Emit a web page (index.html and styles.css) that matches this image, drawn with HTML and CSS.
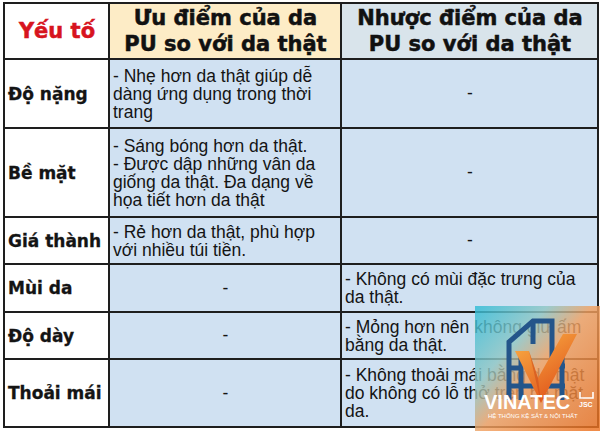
FILE: index.html
```html
<!DOCTYPE html>
<html lang="vi">
<head>
<meta charset="utf-8">
<link rel="stylesheet" href="styles.css">
</head>
<body>
<div class="sheet">
  <table class="cmp">
    <colgroup>
      <col class="c1"><col class="c2"><col class="c3">
    </colgroup>
    <tr class="r-head">
      <th class="h-key">Yếu tố</th>
      <th class="h-pro">Ưu điểm của da<br>PU so với da thật</th>
      <th class="h-con">Nhược điểm của da<br>PU so với da thật</th>
    </tr>
    <tr class="r1">
      <td class="key">Độ nặng</td>
      <td class="txt">- Nhẹ hơn da thật giúp dễ<br>dàng ứng dụng trong thời<br>trang</td>
      <td class="dash">-</td>
    </tr>
    <tr class="r2">
      <td class="key">Bề mặt</td>
      <td class="txt">- Sáng bóng hơn da thật.<br>- Được dập những vân da<br>giống da thật. Đa dạng về<br>họa tiết hơn da thật</td>
      <td class="dash">-</td>
    </tr>
    <tr class="r3">
      <td class="key">Giá thành</td>
      <td class="txt">- Rẻ hơn da thật, phù hợp<br>với nhiều túi tiền.</td>
      <td class="dash">-</td>
    </tr>
    <tr class="r4">
      <td class="key">Mùi da</td>
      <td class="dash">-</td>
      <td class="txt">- Không có mùi đặc trưng của<br>da thật.</td>
    </tr>
    <tr class="r5">
      <td class="key">Độ dày</td>
      <td class="dash">-</td>
      <td class="txt">- Mỏng hơn nên không giữ ấm<br>bằng da thật.</td>
    </tr>
    <tr class="r6">
      <td class="key">Thoải mái</td>
      <td class="dash">-</td>
      <td class="txt">- Không thoải mái bằng da thật<br>do không có lỗ thở trên bề mặt<br>da.</td>
    </tr>
  </table>

  <div class="logo">
    <svg width="125" height="125" viewBox="0 0 125 125" xmlns="http://www.w3.org/2000/svg">
      <defs>
        <linearGradient id="bg" x1="0" y1="0" x2="1" y2="0.9">
          <stop offset="0" stop-color="#2fbcd6"/>
          <stop offset="0.32" stop-color="#8fc6c4"/>
          <stop offset="0.52" stop-color="#f1a060"/>
          <stop offset="1" stop-color="#ec7322"/>
        </linearGradient>
        <linearGradient id="vg" x1="0" y1="0" x2="0.6" y2="1">
          <stop offset="0" stop-color="#fbb347"/>
          <stop offset="1" stop-color="#e0541a"/>
        </linearGradient>
      </defs>
      <rect width="125" height="125" fill="url(#bg)" opacity="0.82"/>
      <g fill="none" stroke="#24558a" stroke-width="5" stroke-linejoin="miter">
        <path d="M34 94 V36 L58 15 H77 V66"/>
        <path d="M46 94 V46"/>
        <path d="M87 42 V94"/>
        <path d="M34 62 H46 M34 80 H90 M72 60 H90"/>
        <path d="M58 15 V38"/>
      </g>
      <polygon points="40,45 54,45 63,72 88,28 102,28 66,97" fill="url(#vg)"/>
      <polygon points="54,45 63,72 66,97" fill="#c9481a" opacity="0.5"/>
      <text x="9" y="103" class="lg-name">VINATEC</text>
      <path d="M105 86 v6 h13 v-6" fill="none" stroke="#fff" stroke-width="1.6"/>
      <text x="104" y="101" class="lg-jsc">JSC</text>
      <text x="13" y="112" class="lg-sub">HỆ THỐNG KỆ SẮT &amp; NỘI THẤT</text>
    </svg>
  </div>
</div>
</body>
</html>
```

FILE: styles.css
```css
html, body {
  margin: 0;
  padding: 0;
  background: #ffffff;
}

.sheet {
  position: relative;
  width: 600px;
  height: 431px;
  overflow: hidden;
  padding-top: 2px;
  box-sizing: border-box;
}

.cmp {
  border-collapse: collapse;
  table-layout: fixed;
  width: 594px;
  margin-left: 3px;
  font-family: "Liberation Sans", Arial, sans-serif;
  color: #141414;
}

.c1 { width: 105px; }
.c2 { width: 232px; }
.c3 { width: 257px; }

.cmp th,
.cmp td {
  border: 2px solid #1e1e1e;
  padding: 0 2px 0 3px;
  vertical-align: middle;
}

.cmp th {
  font-family: "DejaVu Sans", Verdana, sans-serif;
  font-weight: bold;
  font-size: 21px;
  line-height: 26px;
  text-align: center;
  color: #111111;
  -webkit-text-stroke: 0.5px currentColor;
}

.h-key {
  background: #ffffff;
  font-size: 20px;
}
.cmp .h-key { color: #d7141e; }
.h-pro { background: #fdecc6; }
.h-con { background: #d9e4eb; }

.r-head { height: 56px; }
.r1 { height: 69px; }
.r2 { height: 89px; }
.r3 { height: 47px; }
.r4 { height: 48px; }
.r5 { height: 47px; }
.r6 { height: 68px; }

.key {
  background: #ffffff;
  font-family: "DejaVu Sans", Verdana, sans-serif;
  font-weight: bold;
  font-size: 17px;
  text-align: left;
  padding-left: 4px;
  -webkit-text-stroke: 0.3px currentColor;
}

.txt {
  background: #d0e1f2;
  font-size: 17.5px;
  line-height: 18px;
  text-align: left;
}

.dash {
  background: #d0e1f2;
  font-size: 17.5px;
  text-align: center;
}

.logo {
  position: absolute;
  left: 475px;
  top: 306px;
  width: 125px;
  height: 125px;
}

.logo svg { display: block; }

.lg-name {
  font-family: "Liberation Sans", Arial, sans-serif;
  font-weight: bold;
  font-size: 20px;
  fill: #ffffff;
}

.lg-jsc {
  font-family: "Liberation Sans", Arial, sans-serif;
  font-weight: bold;
  font-size: 7px;
  fill: #ffffff;
}

.lg-sub {
  font-family: "Liberation Sans", Arial, sans-serif;
  font-size: 6px;
  fill: #ffffff;
}
```
